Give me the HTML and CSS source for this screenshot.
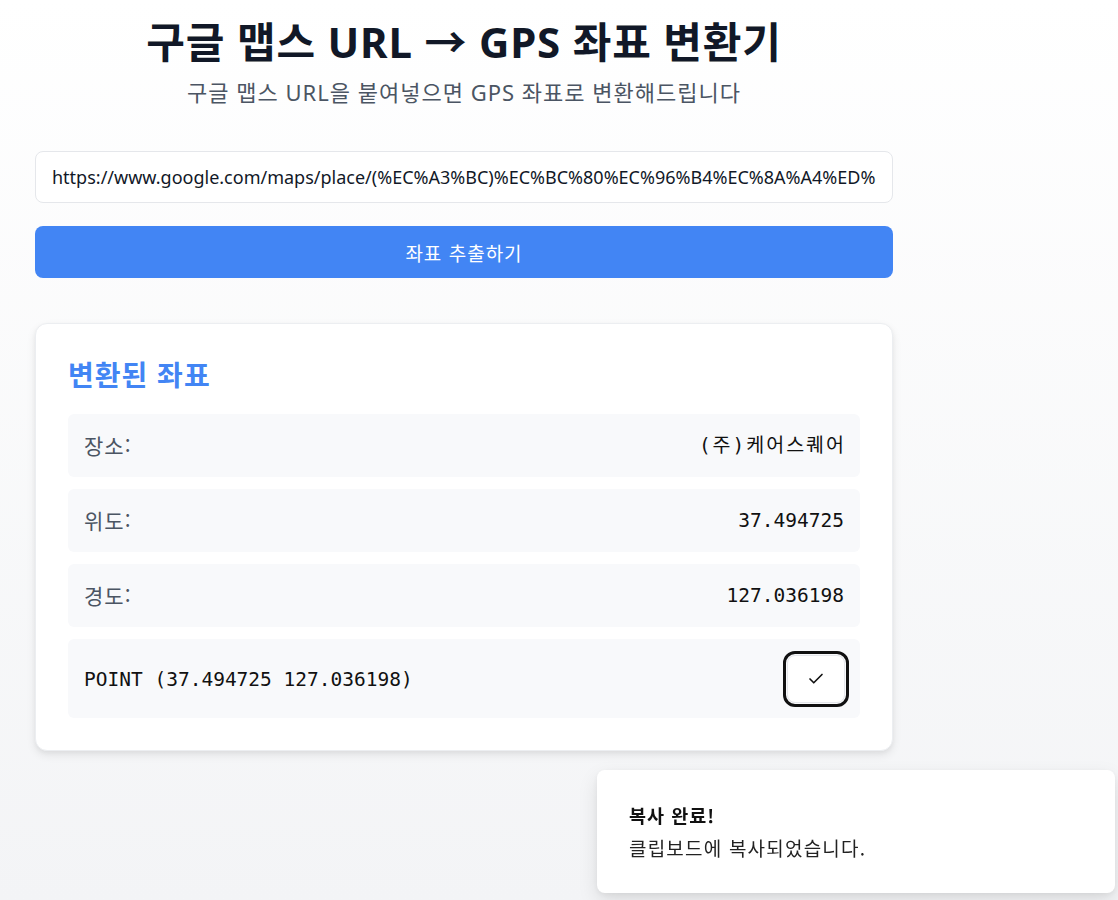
FILE: index.html
```html
<!DOCTYPE html>
<html lang="ko">
<head>
<meta charset="utf-8">
<title>구글 맵스 URL → GPS 좌표 변환기</title>
<link rel="stylesheet" href="styles.css">
</head>
<body>
<main class="page">
  <header class="head">
    <h1 class="title">구글 맵스 URL → GPS 좌표 변환기</h1>
    <p class="subtitle">구글 맵스 URL을 붙여넣으면 GPS 좌표로 변환해드립니다</p>
  </header>
  <div class="form">
    <input class="url-input" type="text" value="https://www.google.com/maps/place/(%EC%A3%BC)%EC%BC%80%EC%96%B4%EC%8A%A4%ED%80%98%EC%96%B4/@37.494725,127.036198">
    <button class="extract-btn" type="button">좌표 추출하기</button>
  </div>
  <section class="card">
    <h2 class="card-title">변환된 좌표</h2>
    <div class="rows">
      <div class="row"><span class="label">장소:</span><span class="value value-ko">(주)케어스퀘어</span></div>
      <div class="row"><span class="label">위도:</span><span class="value">37.494725</span></div>
      <div class="row"><span class="label">경도:</span><span class="value">127.036198</span></div>
      <div class="row row-point">
        <span class="value">POINT (37.494725 127.036198)</span>
        <button class="copy-btn" type="button" aria-label="복사됨">
          <svg width="18" height="18" viewBox="0 0 24 24" fill="none" stroke="#111" stroke-width="2.2" stroke-linecap="round" stroke-linejoin="round"><path d="M20 6 9 17l-5-5"/></svg>
        </button>
      </div>
    </div>
  </section>
</main>
<div class="toast" role="status">
  <div class="toast-title">복사 완료!</div>
  <div class="toast-desc">클립보드에 복사되었습니다.</div>
</div>
</body>
</html>
```

FILE: styles.css
```css
* { box-sizing: border-box; }
html, body { height: 100%; }
body {
  margin: 0;
  min-height: 100%;
  background: linear-gradient(to bottom, #ffffff 0%, #f3f4f6 100%);
  font-family: "Noto Sans", "Noto Sans CJK KR", sans-serif;
  color: #111827;
}
.page {
  width: 858px;
  margin-left: 35px;
  padding-top: 14px;
}
.head { text-align: center; }
.title {
  margin: 0;
  font-size: 42px;
  line-height: 56px;
  font-weight: 700;
  color: #111827;
  letter-spacing: 0.8px;
}
.subtitle {
  margin: 6px 0 0;
  font-size: 22px;
  line-height: 32px;
  color: #4b5563;
  letter-spacing: 1px;
}
.form {
  margin-top: 43px;
  display: flex;
  flex-direction: column;
  gap: 23px;
}
.url-input {
  width: 100%;
  height: 52px;
  border: 1px solid #e5e7eb;
  border-radius: 8px;
  background: #fff;
  padding: 0 16px;
  font-family: "Noto Sans", "Noto Sans CJK KR", sans-serif;
  font-size: 18px;
  color: #111827;
  outline: none;
}
.extract-btn {
  height: 52px;
  border: 0;
  border-radius: 8px;
  background: #4285f4;
  color: #fff;
  font-family: "Noto Sans CJK KR", sans-serif;
  font-size: 19px;
  letter-spacing: 1px;
}
.card {
  margin-top: 45px;
  background: #fff;
  border: 1px solid #eceef1;
  border-radius: 12px;
  padding: 32px 32px 32px;
  box-shadow: 0 4px 10px rgba(0,0,0,0.08), 0 2px 4px rgba(0,0,0,0.04);
}
.card-title {
  margin: 0 0 22px;
  font-family: "Noto Sans CJK KR", sans-serif;
  font-size: 28px;
  line-height: 36px;
  font-weight: 700;
  color: #4285f4;
  letter-spacing: 1px;
}
.rows {
  display: flex;
  flex-direction: column;
  gap: 12px;
}
.row {
  display: flex;
  align-items: center;
  justify-content: space-between;
  background: #f8f9fb;
  border-radius: 6px;
  padding: 16px;
  min-height: 63px;
}
.row-point { padding: 16px 15px 15px 16px; }
.label {
  font-family: "Noto Sans CJK KR", sans-serif;
  font-size: 21px;
  line-height: 31px;
  color: #4b5563;
  letter-spacing: 1px;
}
.value {
  font-family: "DejaVu Sans Mono", "Noto Sans CJK KR", monospace;
  font-size: 19.5px;
  line-height: 31px;
  color: #111;
}
.value-ko { letter-spacing: 2px; margin-right: -2px; }
.copy-btn {
  width: 58px;
  height: 48px;
  display: flex;
  align-items: center;
  justify-content: center;
  background: #fff;
  border: 1px solid #e5e7eb;
  border-radius: 8px;
  outline: 3px solid #111;
  outline-offset: 1px;
  padding: 0;
}
.toast {
  position: fixed;
  left: 597px;
  top: 770px;
  width: 518px;
  height: 123px;
  background: #fff;
  border-radius: 8px;
  padding: 32px 32px;
  box-shadow: 0 8px 20px rgba(0,0,0,0.10), 0 2px 6px rgba(0,0,0,0.06);
  font-family: "Noto Sans CJK KR", sans-serif;
  color: #111;
}
.toast-title {
  font-size: 18.5px;
  line-height: 26px;
  font-weight: 700;
  letter-spacing: 1px;
}
.toast-desc {
  margin-top: 7px;
  font-size: 19px;
  line-height: 26px;
  color: #222;
  letter-spacing: 1.2px;
}
```
